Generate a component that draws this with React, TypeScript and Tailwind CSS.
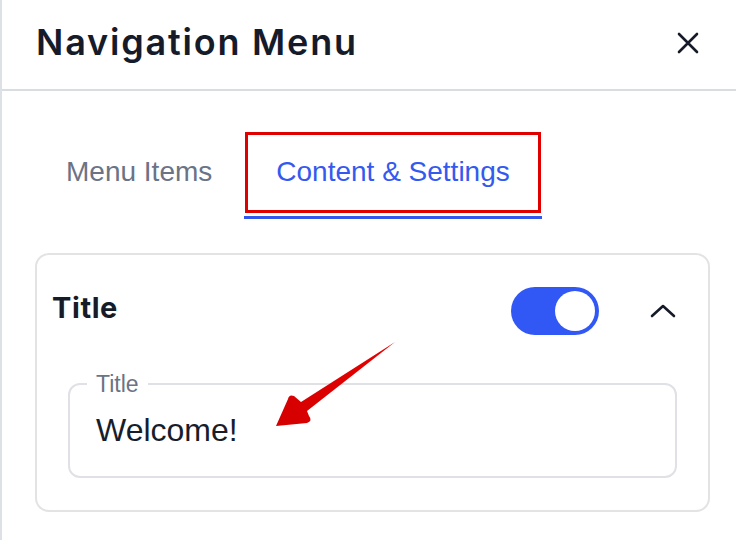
import { useState } from "react";

const heading = { fontFamily: "Inter, 'Noto Sans', sans-serif" };
const body = { fontFamily: "'Liberation Sans', Arial, sans-serif" };

function CloseIcon() {
  return (
    <svg width="22" height="22" viewBox="0 0 22 22" fill="none" stroke="#151a28" strokeWidth="2.6" strokeLinecap="round">
      <path d="M2 2 L20 20 M20 2 L2 20" />
    </svg>
  );
}

function ChevronUp() {
  return (
    <svg width="26" height="14" viewBox="0 0 26 14" fill="none" stroke="#151a28" strokeWidth="2.6" strokeLinecap="round" strokeLinejoin="round">
      <path d="M2 12 L13 2 L24 12" />
    </svg>
  );
}

function Toggle({ on, onChange }: { on: boolean; onChange: () => void }) {
  return (
    <button
      onClick={onChange}
      className={`flex h-[48px] w-[88px] items-center rounded-full px-[4px] ${on ? "justify-end bg-[#3158f4]" : "justify-start bg-[#d1d5db]"}`}
    >
      <span className="block h-[40px] w-[40px] rounded-full bg-white" />
    </button>
  );
}

// callout arrow pointing at the title field
function Pointer() {
  return (
    <svg className="pointer-events-none absolute left-0 top-0" width="736" height="540" viewBox="0 0 736 540">
      <defs>
        <linearGradient id="arrowFill" x1="393" y1="342" x2="274" y2="426" gradientUnits="userSpaceOnUse">
          <stop offset="0" stopColor="#e80000" />
          <stop offset="1" stopColor="#d40000" />
        </linearGradient>
      </defs>
      <path
        d="M393 342 L299 402 L292 396 Q287 394 286 399 L274 426 L305 423 Q311 421 307 416 L305 411 Z"
        fill="url(#arrowFill)"
      />
    </svg>
  );
}

export default function App() {
  const [tab, setTab] = useState("content");
  const [on, setOn] = useState(true);

  const tabs = [
    { id: "items", label: "Menu Items" },
    { id: "content", label: "Content & Settings" },
  ];

  return (
    <div className="relative h-[540px] w-[736px] overflow-hidden border-l-2 border-[#dde0e4] bg-white">
      <header className="flex h-[91px] items-start justify-between border-b-2 border-[#d9dce1] pl-[34px] pr-[37px] pt-[20px]">
        <h1 style={heading} className="text-[36px] font-semibold leading-[44px] tracking-[0.05em] text-[#161b2a]">
          Navigation Menu
        </h1>
        <button className="mt-[12px]">
          <CloseIcon />
        </button>
      </header>

      <div className="mt-[41px] flex pl-[32px]" style={body}>
        {tabs.map((t) => {
          const active = tab === t.id;
          return (
            <button
              key={t.id}
              onClick={() => setTab(t.id)}
              className={`relative flex h-[87px] items-center border-b-[3px] px-[32px] pb-[5px] text-[28px] ${active ? "border-[#3157ef] text-[#3459f0]" : "border-transparent text-[#6b7385]"}`}
            >
              {t.label}
              {active && <span className="absolute bottom-[3px] left-[1px] right-[1px] top-0 border-[3px] border-[#e00000]" />}
            </button>
          );
        })}
      </div>

      <section className="ml-[33px] mt-[34px] w-[675px] rounded-[14px] border-2 border-[#e3e3e3] pb-[32px]">
        <div className="flex items-center pl-[15px] pr-[32px] pt-[31px]">
          <h2 style={heading} className="mb-[6px] flex-1 text-[29px] font-bold tracking-[0.02em] text-[#161b2a]">
            Title
          </h2>
          <Toggle on={on} onChange={() => setOn(!on)} />
          <button className="ml-[51px]">
            <ChevronUp />
          </button>
        </div>

        <fieldset style={body} className="mx-[31px] mt-[35px] rounded-[12px] border-2 border-[#e0e1e6] px-[26px] pb-[27px] pt-[15px]">
          <legend className="-ml-[9px] px-[9px] text-[23px] leading-[26px] text-[#6b7385]">Title</legend>
          <div className="text-[32px] leading-[37px] text-[#181d2c]">Welcome!</div>
        </fieldset>
      </section>

      <Pointer />
    </div>
  );
}
